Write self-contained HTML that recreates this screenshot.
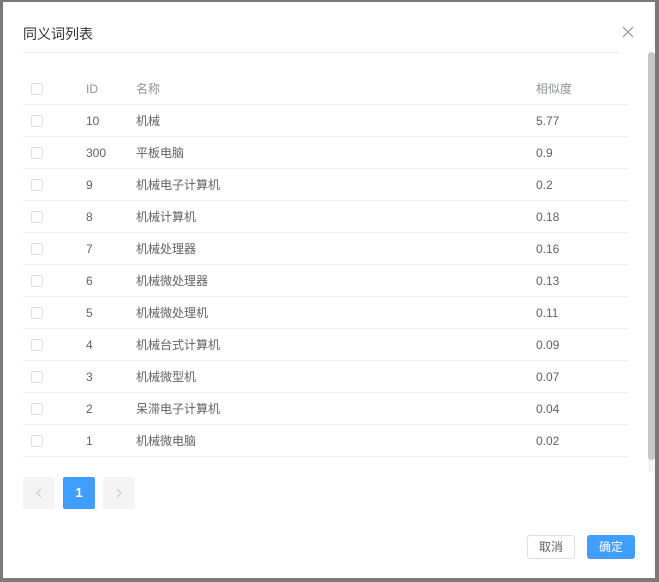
<!DOCTYPE html>
<html><head><meta charset="utf-8"><style>
*{margin:0;padding:0;box-sizing:border-box}
body{width:659px;height:582px;background:#7a7a7a;position:relative;overflow:hidden;font-family:"Liberation Sans","Noto Sans CJK SC",sans-serif;font-size:12px;color:#606266}
.dlg{position:absolute;left:3px;top:2px;width:652px;height:576px;background:#fff}
.title{position:absolute;left:20px;top:22px;font-size:14px;color:#303133}
.tline{position:absolute;left:20px;top:50px;width:596px;height:1px;background:#e4e7ed}
.close{position:absolute;left:619px;top:24px}
.row{position:absolute;left:20px;width:605px;height:32px;border-bottom:1px solid #ebeef5}
.row span{position:absolute;top:9px;line-height:14px}
.cb{position:absolute;left:8px;top:10px;width:12px;height:12px;border:1px solid #dcdfe6;border-radius:2px}
.c1{left:63px}.c2{left:113px}.c3{left:513px}
.hd span{color:#909399}
.pg{position:absolute;top:475px;width:32px;height:32px;background:#f4f4f5;border-radius:2px}
.btn{position:absolute;top:533px;height:24px;border-radius:3px;font-size:12px;text-align:center;line-height:22px}
.sb{position:absolute;left:645px;top:50px;width:7px;height:408px;background:#c8c8c8;border-radius:4px}
.sbt{position:absolute;left:645px;top:448px;width:7px;height:22px;background:#f5f5f5}
</style></head><body>
<div class="dlg">
<div class="title">同义词列表</div>
<svg class="close" width="12" height="12" viewBox="0 0 12 12"><path d="M1 1L11 11M11 1L1 11" stroke="#909399" stroke-width="1.2"/></svg>
<div class="tline"></div>
<div class="row hd" style="top:71px"><div class="cb"></div><span class="c1">ID</span><span class="c2">名称</span><span class="c3">相似度</span></div>
<div class="row" style="top:103px"><div class="cb"></div><span class="c1">10</span><span class="c2">机械</span><span class="c3">5.77</span></div>
<div class="row" style="top:135px"><div class="cb"></div><span class="c1">300</span><span class="c2">平板电脑</span><span class="c3">0.9</span></div>
<div class="row" style="top:167px"><div class="cb"></div><span class="c1">9</span><span class="c2">机械电子计算机</span><span class="c3">0.2</span></div>
<div class="row" style="top:199px"><div class="cb"></div><span class="c1">8</span><span class="c2">机械计算机</span><span class="c3">0.18</span></div>
<div class="row" style="top:231px"><div class="cb"></div><span class="c1">7</span><span class="c2">机械处理器</span><span class="c3">0.16</span></div>
<div class="row" style="top:263px"><div class="cb"></div><span class="c1">6</span><span class="c2">机械微处理器</span><span class="c3">0.13</span></div>
<div class="row" style="top:295px"><div class="cb"></div><span class="c1">5</span><span class="c2">机械微处理机</span><span class="c3">0.11</span></div>
<div class="row" style="top:327px"><div class="cb"></div><span class="c1">4</span><span class="c2">机械台式计算机</span><span class="c3">0.09</span></div>
<div class="row" style="top:359px"><div class="cb"></div><span class="c1">3</span><span class="c2">机械微型机</span><span class="c3">0.07</span></div>
<div class="row" style="top:391px"><div class="cb"></div><span class="c1">2</span><span class="c2">呆滞电子计算机</span><span class="c3">0.04</span></div>
<div class="row" style="top:423px"><div class="cb"></div><span class="c1">1</span><span class="c2">机械微电脑</span><span class="c3">0.02</span></div>
<div class="pg" style="left:20px"><svg width="32" height="32"><path d="M18 12L14 16L18 20" stroke="#c0c4cc" fill="none"/></svg></div>
<div class="pg" style="left:60px;background:#409eff;color:#fff;font-weight:bold;font-size:13px;text-align:center;line-height:32px">1</div>
<div class="pg" style="left:100px"><svg width="32" height="32"><path d="M14 12L18 16L14 20" stroke="#c0c4cc" fill="none"/></svg></div>
<div class="btn" style="left:524px;width:48px;border:1px solid #dcdfe6;color:#606266">取消</div>
<div class="btn" style="left:584px;width:48px;background:#409eff;border:1px solid #409eff;color:#fff">确定</div>
<div class="sbt"></div>
<div class="sb"></div>
</div>
</body></html>
